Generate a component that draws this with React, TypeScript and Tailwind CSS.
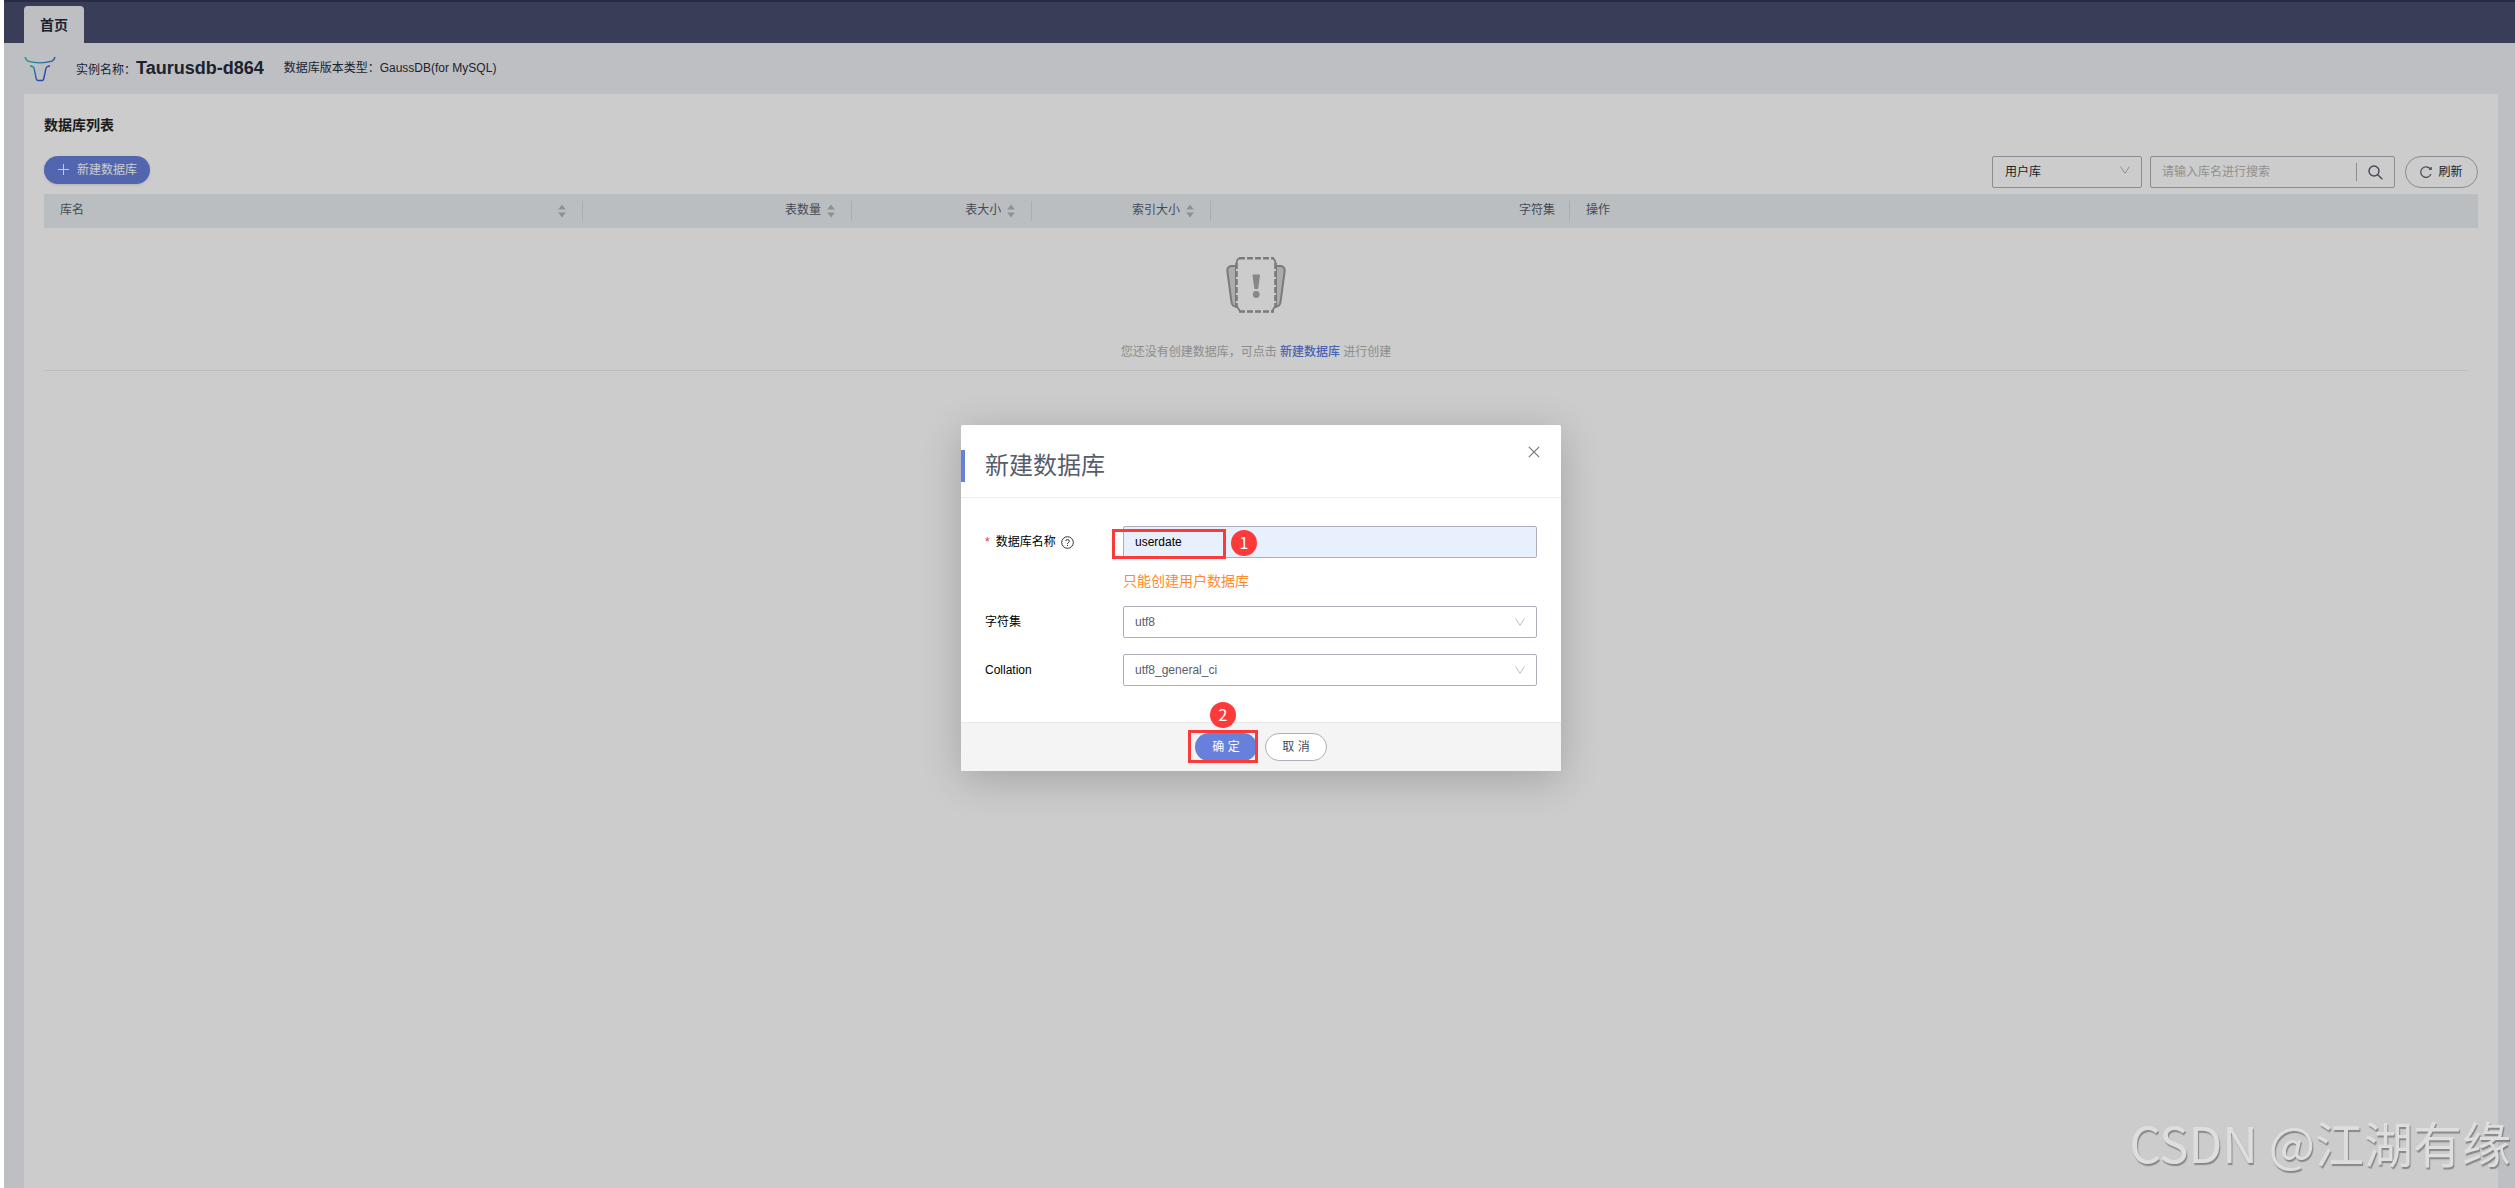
import React from "react";

const SANS = "font-['Liberation_Sans','Noto_Sans_CJK_SC',sans-serif]";

function TaurusLogo() {
  return (
    <svg className="h-[26px] w-8 shrink-0" viewBox="0 0 32 26" fill="none" strokeWidth="1.4" aria-hidden="true">
      <defs>
        <linearGradient id="horns" gradientUnits="userSpaceOnUse" x1="0" y1="0" x2="32" y2="0">
          <stop offset="0" stopColor="#17c3b4" />
          <stop offset="1" stopColor="#4468d0" />
        </linearGradient>
        <linearGradient id="head" gradientUnits="userSpaceOnUse" x1="6" y1="10" x2="22" y2="20">
          <stop offset="0" stopColor="#20b8bc" />
          <stop offset="1" stopColor="#3c50d0" />
        </linearGradient>
      </defs>
      <path d="M1 1C1.500 3 2.500 4 4 5.200C12 7.400 20 7.400 28 5.200C29.500 4 30.500 3 31 1" stroke="url(#horns)" />
      <path d="M6 10C9 10 9.800 11 10.200 13L12.300 23C12.600 24.300 13 24.500 14 24.500H18C19 24.500 19.400 24.300 19.700 23L21.800 13C22.200 11 23 10 26 10" stroke="url(#head)" />
    </svg>
  );
}

function Sorter() {
  return (
    <svg className="h-3.5 w-2 shrink-0" viewBox="0 0 8 14" fill="#b5b5b5" aria-hidden="true">
      <path d="M4 0.500L7.800 5.500H0.200Z" />
      <path d="M4 13.500L7.800 8.500H0.200Z" />
    </svg>
  );
}

function Chevron({ className }: { className: string }) {
  return (
    <svg className={className} viewBox="0 0 10 8" fill="none" stroke="currentColor" aria-hidden="true">
      <path d="M0.500 0.500L5 7.300L9.500 0.500" />
    </svg>
  );
}

function EmptyIcon() {
  return (
    <svg className="mx-auto h-[58px] w-[60px]" viewBox="0 0 60 58" fill="none" stroke="#9a9a9a" strokeWidth="2" aria-hidden="true">
      <path d="M10 10H5.500Q1 10.500 1.300 15L5.500 46Q6 50.500 10 50.500Z" fill="#d6d6d6" />
      <path d="M50 10H54.500Q59 10.500 58.700 15L54.500 46Q54 50.500 50 50.500Z" fill="#d6d6d6" />
      <path
        d="M14 2H46Q49 2 49 5V7L50 10V50L46 55.500H14L10 50V10L11 7V5Q11 2 14 2Z"
        fill="#fff"
        stroke="none"
      />
      <path d="M13 2.200H48M13 55.500H48" strokeDasharray="6 2" strokeWidth="2.400" />
      <path d="M10.500 7V52M49.500 7V52" strokeDasharray="6 2" strokeWidth="2.600" />
      <path d="M10.500 8Q10.500 3 14 2.200M49.500 8Q49.500 3 46 2.200M10.500 50L14 55M49.500 50L46 55" strokeWidth="1.800" />
      <path d="M26.500 19.500Q26.500 18.500 27.500 18.500H33Q34 18.500 34 19.500L32.200 32.500Q30.300 34 28.300 32.500Z" fill="#aaa" stroke="none" />
      <circle cx="30.200" cy="38.500" r="3.400" fill="#aaa" stroke="none" />
    </svg>
  );
}

type Column = { label: string; width: string; right?: boolean; sortable?: boolean };

const columns: Column[] = [
  { label: "库名", width: "w-[22.15%]", sortable: true },
  { label: "表数量", width: "w-[11.05%]", right: true, sortable: true },
  { label: "表大小", width: "w-[7.4%]", right: true, sortable: true },
  { label: "索引大小", width: "w-[7.35%]", right: true, sortable: true },
  { label: "字符集", width: "w-[14.75%]", right: true },
  { label: "操作", width: "w-[37.3%]" },
];

function HeaderCell({ label, width, right, sortable }: Column) {
  const divided = label !== "操作";
  const justify = right ? "justify-end" : "justify-between";
  return (
    <th scope="col" className={`${width} h-[34px] p-0 font-normal`}>
      <div
        className={`flex h-5 items-center gap-1.5 pl-4 leading-5 ${justify} ${
          divided ? "border-r border-[#d5dade]" : ""
        } ${sortable ? "pr-4" : "pr-3.5"}`}
      >
        <span className="pb-0.5">{label}</span>
        {sortable && <Sorter />}
      </div>
    </th>
  );
}

function Toolbar() {
  return (
    <div className="flex items-start justify-between">
      <button
        type="button"
        className="flex h-7 items-center gap-2 rounded-full bg-[#6780dc] px-[13px] text-white shadow-sm"
      >
        <svg className="size-3" viewBox="0 0 12 12" stroke="currentColor" aria-hidden="true">
          <path d="M6.500 0V11M1 5.500H12" />
        </svg>
        新建数据库
      </button>
      <div className="flex text-[#414a5f]">
        <div className="relative mr-2">
          <select
            aria-label="库类型"
            className="h-8 w-[150px] appearance-none rounded-xs border border-[#adb0b8] bg-white px-3 text-[#252b3a]"
          >
            <option>用户库</option>
          </select>
          <Chevron className="pointer-events-none absolute right-3 top-2.5 h-2 w-2.5 text-[#b5b5b5]" />
        </div>
        <div className="mr-2.5 flex h-8 w-[245px] items-center rounded-xs border border-[#adb0b8]">
          <input
            type="text"
            aria-label="搜索库名"
            placeholder="请输入库名进行搜索"
            className="h-full min-w-0 flex-1 bg-transparent px-[11px] outline-none placeholder:text-[#b5b5b5]"
          />
          <button
            type="button"
            aria-label="搜索"
            className="flex h-[18px] w-[38px] items-center justify-center border-l border-[#adb0b8]"
          >
            <svg className="size-[15px]" viewBox="0 0 15 15" fill="none" stroke="#575d6c" strokeWidth="1.400" aria-hidden="true">
              <circle cx="6" cy="6" r="5" />
              <path d="M9.500 9.500L14.300 14.300" />
            </svg>
          </button>
        </div>
        <button
          type="button"
          className="flex h-8 w-[73px] items-center justify-center gap-1.5 rounded-full border border-[#adb0b8] text-[#252b3a]"
        >
          <svg className="size-3" viewBox="0 0 12 12" fill="none" stroke="#575d6c" strokeWidth="1.200" aria-hidden="true">
            <path d="M11 8A5.300 5.300 0 1 1 10.500 3.200" />
            <path d="M11.200 1V3.500H9.200" />
          </svg>
          刷新
        </button>
      </div>
    </div>
  );
}

function StepBadge({ n, place }: { n: number; place: string }) {
  return (
    <span
      className={`absolute z-10 flex size-[26px] items-center justify-center rounded-full bg-[#fd3a3a] pb-0.5 font-['Noto_Sans_CJK_SC',sans-serif] text-base leading-none text-white ${place}`}
    >
      {n}
    </span>
  );
}

function SelectField({ id, label, value }: { id: string; label: string; value: string }) {
  return (
    <div className="flex h-8 items-center">
      <label htmlFor={id} className="w-[137px] text-black">
        {label}
      </label>
      <div className="relative flex-1">
        <select
          id={id}
          className="block h-8 w-full appearance-none rounded-xs border border-[#adb0b8] bg-white px-[11px] text-[#575d6c]"
        >
          <option>{value}</option>
        </select>
        <Chevron className="pointer-events-none absolute right-3 top-3 h-2 w-2.5 text-[#bdbdbd]" />
      </div>
    </div>
  );
}

function CreateDialog() {
  return (
    <div
      role="dialog"
      aria-modal="true"
      aria-labelledby="dialog-title"
      className="w-[600px] rounded-xs bg-white shadow-[0_8px_40px_rgba(0,0,0,0.2)]"
    >
      <div className="flex h-[73px] items-start justify-between border-b border-[#ececec] pt-[25px]">
        <h2
          id="dialog-title"
          className="h-8 border-l-4 border-[#6780dc] pl-5 text-2xl leading-8 text-[#575d6c]"
        >
          新建数据库
        </h2>
        <button type="button" aria-label="关闭" className="-mt-[5px] mr-5 p-px">
          <svg className="size-3" viewBox="0 0 12 12" stroke="#777" strokeWidth="1.200" aria-hidden="true">
            <path d="M0.800 0.800L11.200 11.200M11.200 0.800L0.800 11.200" />
          </svg>
        </button>
      </div>

      <form className="pb-9 pl-6 pr-6 pt-7">
        <div className="flex h-8 items-center">
          <label htmlFor="db-name" className="flex w-[138px] items-center text-black">
            <span className="mr-1.5 text-[#f23030]">*</span>
            数据库名称
            <svg className="ml-[5px] size-[13px]" viewBox="0 0 13 13" fill="none" stroke="#333" aria-hidden="true">
              <circle cx="6.500" cy="6.500" r="5.800" />
              <path d="M4.700 5.200Q4.800 3.500 6.500 3.500T8.300 5.100Q8.300 6 7.300 6.500Q6.500 7 6.500 8M6.500 8.900V10" />
            </svg>
          </label>
          <div className="relative flex-1">
            <input
              id="db-name"
              type="text"
              defaultValue="userdate"
              className="block h-8 w-full rounded-xs border border-[#adb0b8] bg-[#e8f0fe] px-[11px] text-black outline-none"
            />
            <span className="pointer-events-none absolute -left-[11px] top-[3px] h-[30px] w-[114px] border-3 border-[#fd3a3a]" />
            <StepBadge n={1} place="left-[108px] top-1" />
          </div>
        </div>
        <p className="ml-[138px] mt-3 text-sm leading-[22px] text-[#ff8a2b]">只能创建用户数据库</p>
        <div className="mt-3.5 flex flex-col gap-4">
          <div className="[&_label]:w-[138px]">
            <SelectField id="charset" label="字符集" value="utf8" />
          </div>
          <div className="[&_label]:w-[138px]">
            <SelectField id="collation" label="Collation" value="utf8_general_ci" />
          </div>
        </div>
      </form>

      <div className="flex justify-center gap-2 border-t border-[#e9e9e9] bg-[#f4f4f4] py-2.5">
        <div className="relative">
          <button
            type="submit"
            className="block h-7 w-[62px] rounded-full bg-[#6780dc] text-white"
          >
            确 定
          </button>
          <span className="pointer-events-none absolute -left-[7px] -top-[3px] h-[33px] w-[70px] border-3 border-[#fd3a3a]" />
          <StepBadge n={2} place="left-[15px] -top-[31px]" />
        </div>
        <button
          type="button"
          className="h-7 w-[62px] rounded-full border border-[#adb0b8] bg-white text-[#414a5f]"
        >
          取 消
        </button>
      </div>
    </div>
  );
}

export default function App() {
  return (
    <div className={`relative flex min-h-screen bg-white pl-1 text-xs ${SANS}`}>
      <div className="flex flex-1 flex-col bg-[#eeeff4]">
        <header className="flex h-[43px] items-end border-t-2 border-[#333852] bg-[#494d6e] px-5">
          <nav>
            <a
              href="#home"
              className="flex h-[37px] items-center rounded-t-sm bg-[#eeeff4] px-4 text-sm font-bold text-[#252b3a]"
            >
              首页
            </a>
          </nav>
        </header>

        <div className="flex h-[51px] items-center whitespace-nowrap px-5 text-[#252b3a]">
          <TaurusLogo />
          <div className="ml-5 flex items-baseline">
            <span className="w-[60px]">实例名称：</span>
            <strong className="text-lg leading-none">Taurusdb-d864</strong>
          </div>
          <span className="ml-5 pb-0.5">数据库版本类型：GaussDB(for MySQL)</span>
        </div>

        <main className="ml-5 mr-[17px] flex-1 bg-white px-5 pt-[21px]">
          <h1 className="mb-[21px] text-sm font-bold leading-5 text-[#252525]">数据库列表</h1>
          <Toolbar />
          <table className="mt-1.5 w-full table-fixed border-collapse text-left text-[#575d6c]">
            <thead className="bg-[#e9eef2]">
              <tr>
                {columns.map((c) => (
                  <HeaderCell key={c.label} {...c} />
                ))}
              </tr>
            </thead>
          </table>
          <div className="mr-2.5 border-b border-[#ececec] pb-2 pt-7 text-center text-[#b0b0b0]">
            <EmptyIcon />
            <p className="mt-7 leading-5">
              您还没有创建数据库，可点击{" "}
              <a href="#create" className="font-medium text-[#5e7ce0]">
                新建数据库
              </a>{" "}
              进行创建
            </p>
          </div>
        </main>
      </div>

      <div className="absolute inset-y-0 left-1 right-0 flex items-start justify-center bg-black/20 pl-[3px] pt-[425px]">
        <CreateDialog />
      </div>

      <div className="pointer-events-none absolute bottom-2.5 right-1 whitespace-nowrap font-['Noto_Sans_CJK_SC',sans-serif] text-[49px] leading-[72px] text-[#dedede] [text-shadow:1px_2px_1px_rgba(90,90,90,0.6)]">
        CSDN @江湖有缘
      </div>
    </div>
  );
}
